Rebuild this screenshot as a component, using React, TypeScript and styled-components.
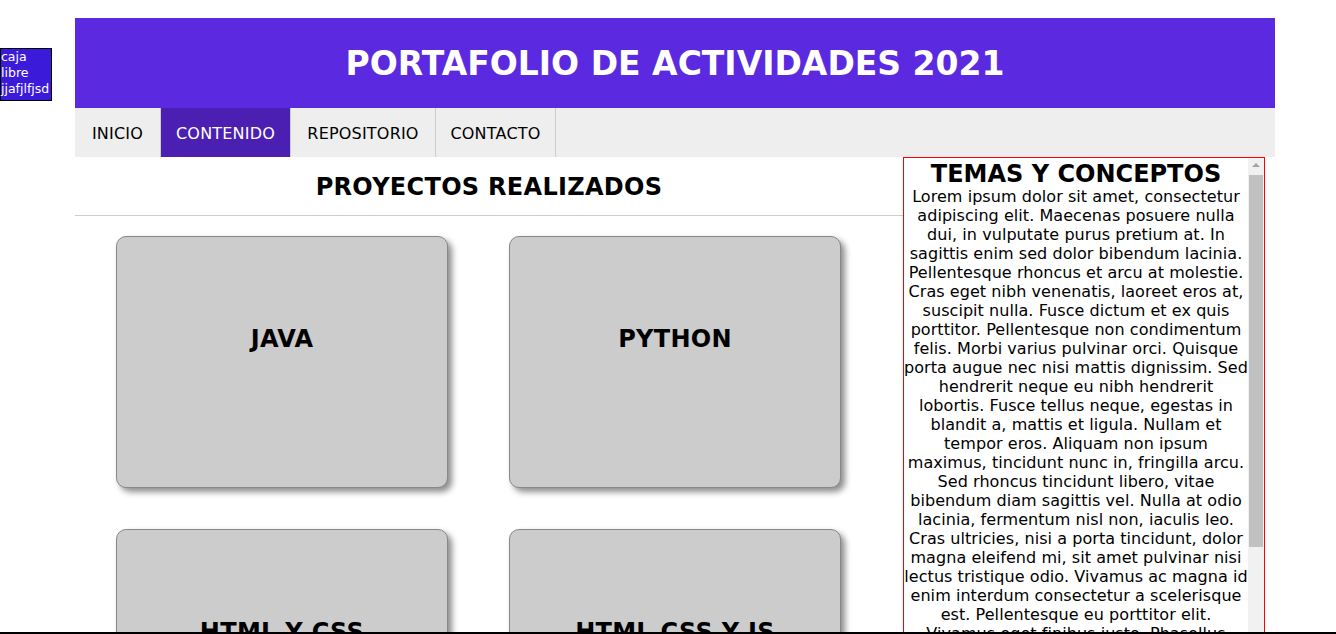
import styled, { createGlobalStyle } from 'styled-components';

const GlobalStyle = createGlobalStyle`
  body {
    margin: 0;
    background: #fff;
    font-family: 'DejaVu Sans', Verdana, sans-serif;
    overflow: hidden;
  }
`;

const Page = styled.div`
  width: 1200px;
  margin-left: 75px;
  padding-top: 18px;
`;

const Header = styled.header`
  height: 90px;
  background-color: #5b2ae0;
  display: flex;
  align-items: center;
  justify-content: center;

  h1 {
    margin: 0;
    color: #fff;
    font-size: 33px;
    font-weight: bold;
  }
`;

const Nav = styled.nav`
  height: 49px;
  background-color: #eee;
  display: flex;
`;

const NavItem = styled.a<{ $active?: boolean; $width: number }>`
  display: flex;
  align-items: center;
  justify-content: center;
  box-sizing: border-box;
  width: ${(p) => p.$width}px;
  padding-top: 1px;
  font-size: 16px;
  letter-spacing: 0.2px;
  color: ${(p) => (p.$active ? '#fff' : '#000')};
  background-color: ${(p) => (p.$active ? '#4a1fb1' : 'transparent')};
  border-right: 1px solid #ccc;
  text-decoration: none;
  cursor: pointer;
`;

const Content = styled.div`
  display: flex;
  align-items: flex-start;
`;

const Projects = styled.section`
  width: 69%;
`;

const SectionTitle = styled.h2`
  margin: 0;
  height: 59px;
  padding-top: 2px;
  box-sizing: border-box;
  display: flex;
  align-items: center;
  justify-content: center;
  font-size: 24px;
  letter-spacing: 0.3px;
  border-bottom: 1px solid #ccc;
`;

const CardGrid = styled.div`
  display: grid;
  grid-template-columns: 332px 332px;
  column-gap: 61px;
  row-gap: 41px;
  padding: 20px 0 0 41px;
`;

const Card = styled.div`
  height: 252px;
  box-sizing: border-box;
  border: 1px solid #888;
  border-radius: 10px;
  background-color: #ccc;
  box-shadow: 4px 4px 6px rgba(0, 0, 0, 0.45);
  padding-top: 88px;
  text-align: center;

  h3 {
    margin: 0;
    font-size: 24px;
    line-height: 28px;
    letter-spacing: 0.3px;
  }
`;

const Sidebar = styled.aside`
  width: 30%;
  height: 600px;
  border: 1px solid red;
  display: flex;
`;

const SideText = styled.div`
  flex: 1;
  overflow: hidden;
  text-align: center;

  h2 {
    margin: 0;
    padding-top: 2px;
    font-size: 24px;
    line-height: 28px;
  }

  p {
    margin: 0;
    margin-top: -1px;
    font-size: 16px;
    line-height: 19px;
    letter-spacing: 0.06px;
  }
`;

const ScrollTrack = styled.div`
  width: 16px;
  flex-shrink: 0;
  background: #f1f1f1;
  display: flex;
  flex-direction: column;
  align-items: center;
`;

const ScrollArrow = styled.div`
  margin-top: 5px;
  width: 0;
  height: 0;
  border-left: 4px solid transparent;
  border-right: 4px solid transparent;
  border-bottom: 4px solid #a3a3a3;
`;

const ScrollThumb = styled.div`
  margin-top: 8px;
  width: 14px;
  height: 372px;
  background: #c1c1c1;
`;

const FreeBox = styled.div`
  position: absolute;
  left: 0;
  top: 48px;
  width: 50px;
  height: 51px;
  border: 1px solid #000;
  background-color: #3b1bd9;
  color: #fff;
  font-size: 12.5px;
  line-height: 16px;
  white-space: nowrap;
`;

const BottomLine = styled.div`
  position: fixed;
  left: 0;
  right: 0;
  bottom: 0;
  height: 2px;
  background: #000;
`;

const navLinks = [
  { label: 'INICIO', width: 86 },
  { label: 'CONTENIDO', width: 130, active: true },
  { label: 'REPOSITORIO', width: 145 },
  { label: 'CONTACTO', width: 120 },
];

const projects = ['JAVA', 'PYTHON', 'HTML Y CSS', 'HTML CSS Y JS'];

const lorem =
  'Lorem ipsum dolor sit amet, consectetur adipiscing elit. Maecenas posuere nulla dui, in vulputate purus pretium at. In sagittis enim sed dolor bibendum lacinia. Pellentesque rhoncus et arcu at molestie. Cras eget nibh venenatis, laoreet eros at, suscipit nulla. Fusce dictum et ex quis porttitor. Pellentesque non condimentum felis. Morbi varius pulvinar orci. Quisque porta augue nec nisi mattis dignissim. Sed hendrerit neque eu nibh hendrerit lobortis. Fusce tellus neque, egestas in blandit a, mattis et ligula. Nullam et tempor eros. Aliquam non ipsum maximus, tincidunt nunc in, fringilla arcu. Sed rhoncus tincidunt libero, vitae bibendum diam sagittis vel. Nulla at odio lacinia, fermentum nisl non, iaculis leo. Cras ultricies, nisi a porta tincidunt, dolor magna eleifend mi, sit amet pulvinar nisi lectus tristique odio. Vivamus ac magna id enim interdum consectetur a scelerisque est. Pellentesque eu porttitor elit. Vivamus eget finibus justo. Phasellus consequat, lorem nec mi vestibulum ultrices. Integer et quam vitae nisl posuere tempor. Donec ornare metus vel ipsum gravida, et pulvinar lectus placerat. Aenean malesuada turpis sed arcu dictum, at facilisis justo dapibus.';

function App() {
  return (
    <>
      <GlobalStyle />
      <FreeBox>
        caja
        <br />
        libre
        <br />
        jjafjlfjsd
      </FreeBox>
      <Page>
        <Header>
          <h1>PORTAFOLIO DE ACTIVIDADES 2021</h1>
        </Header>
        <Nav>
          {navLinks.map((link) => (
            <NavItem key={link.label} $width={link.width} $active={link.active}>
              {link.label}
            </NavItem>
          ))}
        </Nav>
        <Content>
          <Projects>
            <SectionTitle>PROYECTOS REALIZADOS</SectionTitle>
            <CardGrid>
              {projects.map((name) => (
                <Card key={name}>
                  <h3>{name}</h3>
                </Card>
              ))}
            </CardGrid>
          </Projects>
          <Sidebar>
            <SideText>
              <h2>TEMAS Y CONCEPTOS</h2>
              <p>{lorem}</p>
            </SideText>
            <ScrollTrack>
              <ScrollArrow />
              <ScrollThumb />
            </ScrollTrack>
          </Sidebar>
        </Content>
      </Page>
      <BottomLine />
    </>
  );
}

export default App;
